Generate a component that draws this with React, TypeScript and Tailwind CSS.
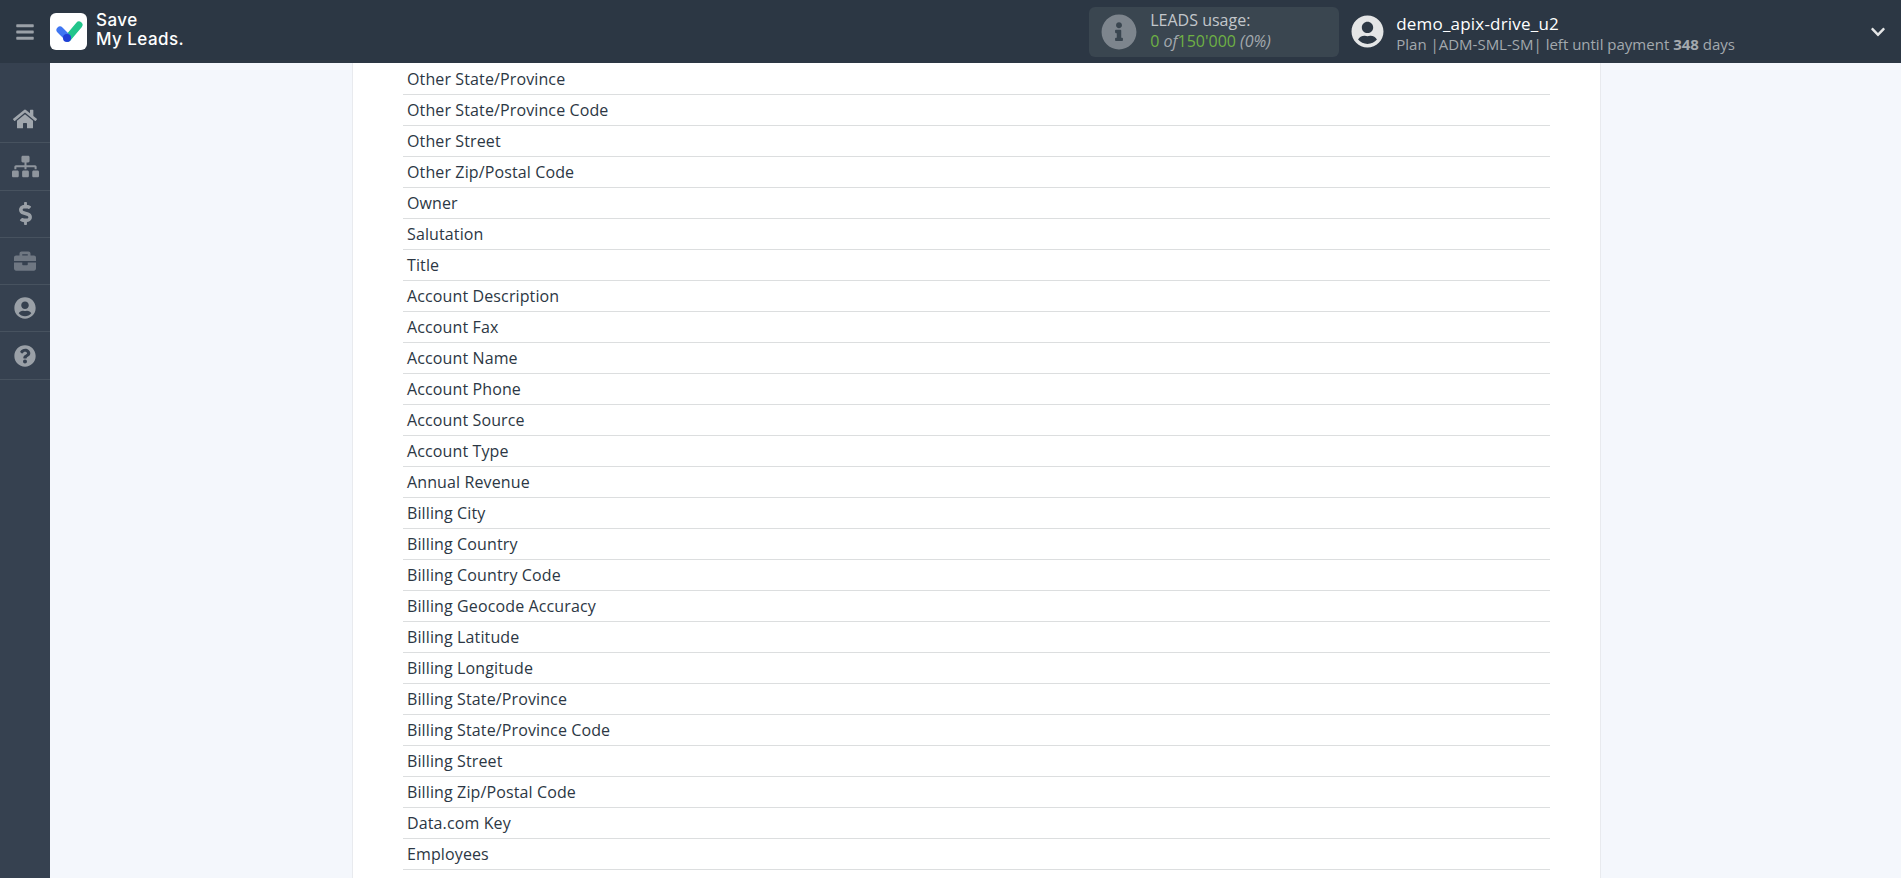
import { FaBars, FaBriefcase, FaChevronDown, FaDollarSign, FaHome, FaInfoCircle, FaQuestionCircle, FaSitemap, FaUserCircle } from 'react-icons/fa';

const fields = [
  'Other State/Province',
  'Other State/Province Code',
  'Other Street',
  'Other Zip/Postal Code',
  'Owner',
  'Salutation',
  'Title',
  'Account Description',
  'Account Fax',
  'Account Name',
  'Account Phone',
  'Account Source',
  'Account Type',
  'Annual Revenue',
  'Billing City',
  'Billing Country',
  'Billing Country Code',
  'Billing Geocode Accuracy',
  'Billing Latitude',
  'Billing Longitude',
  'Billing State/Province',
  'Billing State/Province Code',
  'Billing Street',
  'Billing Zip/Postal Code',
  'Data.com Key',
  'Employees',
];

const navItems = [
  { icon: FaHome, size: 'text-[24px]', tone: 'text-[#a0a6ad]' },
  { icon: FaSitemap, size: 'text-[27px]', tone: 'text-[#8f959d]' },
  { icon: FaDollarSign, size: 'text-[23px]', tone: 'text-[#9aa0a7]' },
  { icon: FaBriefcase, size: 'text-[22px]', tone: 'text-[#6f7782]' },
  { icon: FaUserCircle, size: 'text-[22px]', tone: 'text-[#9aa0a7]' },
  { icon: FaQuestionCircle, size: 'text-[22px]', tone: 'text-[#9aa0a7]' },
];

function Logo() {
  return (
    <div className="flex items-center gap-[9px]">
      <div className="h-[37px] w-[37px] rounded-[6px] bg-white">
        <svg width="37" height="37" viewBox="0 0 37 37">
          <path d="M18 25 L29 12" stroke="#22c58b" strokeWidth="7" strokeLinecap="round" fill="none" />
          <path d="M10 17 L17 24" stroke="#3f76f2" strokeWidth="7" strokeLinecap="round" fill="none" />
          <circle cx="17" cy="25" r="4" fill="#1f3fd6" />
        </svg>
      </div>
      <div className="-mt-[4px] font-['Inter',sans-serif] text-[17px] leading-[19px] font-medium tracking-[0.45px] text-white">
        <div>Save</div>
        <div>My Leads.</div>
      </div>
    </div>
  );
}

function Header() {
  return (
    <header className="flex h-[63px] shrink-0 items-center bg-[#2c3744] font-['Open_Sans',sans-serif]">
      <div className="flex w-[50px] justify-center">
        <FaBars className="text-[20px] text-[#9aa0a7]" />
      </div>
      <Logo />
      <div className="ml-[905px] flex h-[50px] w-[250px] items-center rounded-[6px] bg-[#3a4650] pl-[12px]">
        <FaInfoCircle className="text-[36px] text-[#7d858d]" />
        <div className="ml-[13px] -mt-[1px] text-[16px] leading-[21px]">
          <div className="text-[#c3c7cb]">LEADS usage:</div>
          <div className="text-[#6eb144]">
            0 <span className="text-[#a3a9ae] italic">of</span>150'000{' '}
            <span className="text-[#a3a9ae] italic">(0%)</span>
          </div>
        </div>
      </div>
      <div className="ml-[12px] flex items-center">
        <FaUserCircle className="text-[33px] text-[#e4e5e6]" />
        <div className="ml-[12px] mt-[3px]">
          <div className="text-[17px] leading-[22px] tracking-[0.2px] text-white">demo_apix-drive_u2</div>
          <div className="text-[15px] leading-[19px] text-[#a3a9ae]">
            Plan |ADM-SML-SM| left until payment <b className="font-bold">348</b> days
          </div>
        </div>
      </div>
      <div className="ml-auto pr-[15px]">
        <FaChevronDown className="text-[16px] text-[#e4e5e6]" />
      </div>
    </header>
  );
}

function Sidebar() {
  return (
    <aside className="w-[50px] shrink-0 bg-[#364150] pt-[33px]">
      {navItems.map(({ icon: Icon, size, tone }, i) => (
        <div key={i} className="flex h-[47.3px] items-center justify-center border-b border-[#47525f]">
          <Icon className={`${size} ${tone}`} />
        </div>
      ))}
    </aside>
  );
}

export default function App() {
  return (
    <div className="flex h-[878px] flex-col overflow-hidden bg-[#f4f7fc] font-['Open_Sans',sans-serif]">
      <Header />
      <div className="flex min-h-0 flex-1">
        <Sidebar />
        <main className="min-w-0 flex-1 pl-[302px]">
          <div className="h-full w-[1249px] border-x border-[#e8eaee] bg-white px-[50px] pt-[1px]">
            {fields.map((f) => (
              <div key={f} className="h-[31px] border-b border-[#dcdedf] pl-[4px] text-[16px] leading-[30px] tracking-[0.12px] text-[#2c3744]">
                {f}
              </div>
            ))}
          </div>
        </main>
      </div>
    </div>
  );
}
